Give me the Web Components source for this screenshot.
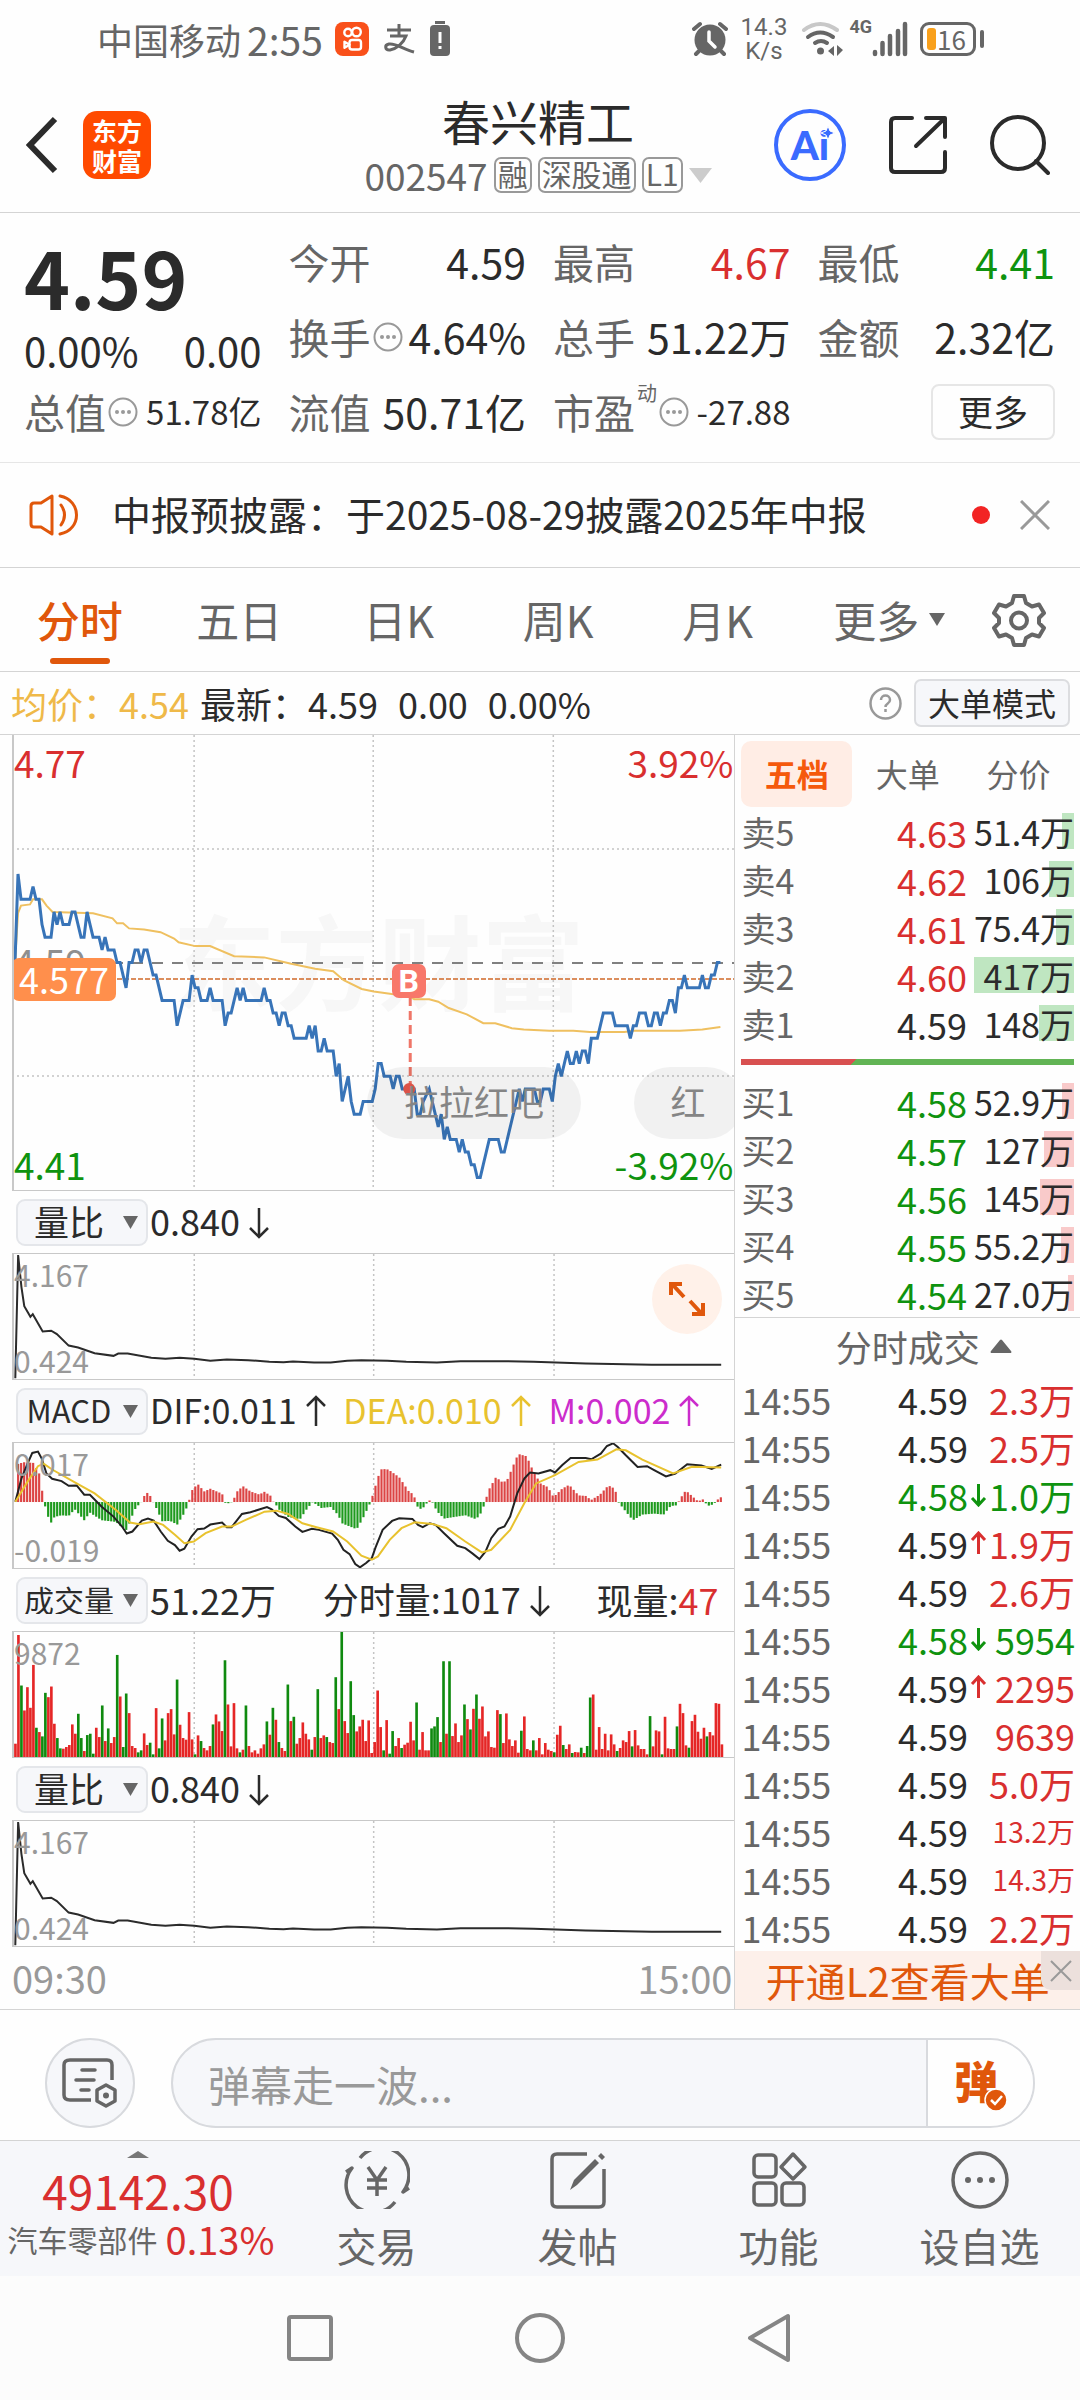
<!DOCTYPE html>
<html lang="zh-CN">
<head>
<meta charset="utf-8">
<meta name="viewport" content="width=device-width, initial-scale=1">
<title>春兴精工 002547</title>
<style>
  :root {
    --ink: #2b2b2b; --muted: #666; --faint: #999; --line: #d4d4d4;
    --up: #d92f2f; --down: #0f930f; --brand: #e0570b; --panel: #f6f7fa;
  }
  body { margin: 0; background: #fefefe; color: var(--ink); line-height: 1;
    font-family: "Noto Sans CJK SC", "Noto Sans", sans-serif; }
</style>
</head>
<body>
<stock-app></stock-app>
<script>
const BASE = `
  *, *::before, *::after { box-sizing: border-box; }
  button, input, select { font: inherit; color: inherit; background: none; border: 0; padding: 0; margin: 0; line-height: 1; }
  svg { display: block; flex: none; }
  svg:not([fill]) { fill: none; }
  svg:not([stroke]) { stroke: currentColor; }
  a { color: inherit; text-decoration: none; }
  .up { color: var(--up); } .down { color: var(--down); }
`;
function component(tag, css, html, setup) {
  const tpl = document.createElement('template');
  tpl.innerHTML = `<style>${BASE}${css}</style>${html}`;
  customElements.define(tag, class extends HTMLElement {
    constructor() { super(); this.attachShadow({ mode: 'open' }).append(tpl.content.cloneNode(true)); }
    connectedCallback() { if (setup && !this.ready) { this.ready = true; setup(this, this.shadowRoot); } }
  });
}

/* ---------- status bar ---------- */
component('status-bar', `
  :host { display: flex; justify-content: space-between; align-items: center; height: 78px; padding: 0 96px 0 97px; color: var(--muted); }
  div { display: flex; align-items: center; }
  .carrier { font-size: 36px; margin-right: 6px; }
  .time { font-size: 39px; margin-right: 12px; }
  .l svg { margin-right: 13px; }
  .r { height: 48px; }
  .speed { display: block; font: 24px/24px Roboto, "Liberation Sans", sans-serif; text-align: center; margin: 0 14px 0 13px; }
  .net { font: 700 18px/20px Roboto, "Liberation Sans", sans-serif; align-self: flex-start; margin: 2px 0 0 6px; }
  .bat { gap: 4px; margin-left: 12px; }
  .cell { width: 56px; height: 34px; padding-left: 4px; border: 3px solid var(--muted); border-radius: 9px; font-size: 26px; gap: 1px; }
  .cell::before { content: ""; width: 9px; height: 22px; border-radius: 3px; background: #f9a01b; }
  .bat::after { content: ""; width: 4px; height: 18px; border-radius: 2px; background: var(--muted); }
`, `
  <div class="l">
    <span class="carrier">中国移动</span><span class="time">2:55</span>
    <svg width="34" height="34" viewBox="0 0 34 34" stroke="none"><rect width="34" height="34" rx="8" fill="#f9501a"/><g stroke="#fff" stroke-width="2.4" fill="none"><circle cx="13" cy="10.5" r="3.7"/><circle cx="21.5" cy="10" r="4.3"/><rect x="14.5" y="18" width="11.5" height="9.5" rx="2.6"/><path d="M14.5 22.7l-5-3v6z" stroke-linejoin="round"/></g></svg>
    <svg width="34" height="34" viewBox="0 0 34 34" stroke-width="3"><path d="M5 8h24M17 2v12M8 14h16c-3 8-10 13-16 14-5 .5-6-5-1-6 7-1 14 5 25 8"/></svg>
    <svg width="22" height="36" viewBox="0 0 22 36" stroke="none" fill="#666"><rect x="6" y="0" width="10" height="3"/><rect x="1" y="4" width="20" height="31" rx="4"/><path d="M9.5 11h3v11h-3zM9.5 25h3v3h-3z" fill="#fff"/></svg>
  </div>
  <div class="r">
    <svg width="36" height="38" viewBox="0 0 36 38"><circle cx="18" cy="20" r="15.5" fill="#666" stroke="none"/><path d="M2 9l6-5M34 9l-6-5M7 31l-3 3M29 31l3 3" stroke-width="4" stroke-linecap="round"/><path d="M17 12v9l6 6" stroke="#fff" stroke-width="3.5" stroke-linecap="round"/></svg>
    <span class="speed">14.3<br>K/s</span>
    <svg width="42" height="36" viewBox="0 0 42 36" stroke-width="4" stroke-linecap="round"><path d="M3 9q16-12 33 0" stroke="#c8c8c8"/><path d="M7 16q12-9 25 0M14 22q6-4 12 0"/><circle cx="19.500" cy="30" r="3.500" fill="#666" stroke="none"/><path d="M27 30l6-5v10zM36 24l6 5-6 6z" fill="#666" stroke="none"/></svg>
    <span class="net">4G</span>
    <svg width="36" height="36" viewBox="0 0 36 36" stroke-width="4.500" stroke-linecap="round"><path d="M3 33v-2M10.500 33V22M18 33V15M26 33V10M33 33V3"/></svg>
    <div class="bat"><div class="cell">16</div></div>
  </div>
`);

/* ---------- header ---------- */
component('stock-header', `
  :host { display: grid; grid-template-columns: 1fr auto 1fr; align-items: center; height: 135px; padding: 0 30px 0 26px; border-bottom: 1px solid var(--line); }
  .l, .r { display: flex; align-items: center; }
  .l { gap: 25px; } .r { justify-content: flex-end; gap: 43px; }
  .logo { display: grid; place-content: center; width: 68px; height: 68px; border-radius: 14px; background: #ff4a00; color: #fff; font-size: 25px; font-weight: 700; line-height: 30px; text-align: center; }
  h1 { margin: 0 0 9px; font-size: 48px; font-weight: 400; text-align: center; line-height: 48px; padding-bottom: 3px; }
  .sub { display: flex; align-items: center; gap: 6px; color: var(--muted); font-size: 37px; line-height: 38px; }
  .tag { font-size: 30px; line-height: 29px; height: 36px; border: 2px solid #999; border-radius: 7px; padding: 0 2px; }
  .ai { position: relative; width: 72px; height: 72px; border: 4px solid #3a6bff; border-radius: 50%; color: #3a6bff; font: 900 40px/62px Lato, "Liberation Sans", sans-serif; text-align: center; }
  .ai svg { position: absolute; left: 43px; top: 13px; }
`, `
  <div class="l">
    <button aria-label="返回"><svg width="32" height="58" viewBox="0 0 32 58" stroke-width="6"><path d="M29 3L4 29l25 26"/></svg></button>
    <a class="logo" href="#home">东方<br>财富</a>
  </div>
  <div>
    <h1>春兴精工</h1>
    <div class="sub"><span>002547</span><span class="tag">融</span><span class="tag">深股通</span><span class="tag">L1</span>
      <svg width="23" height="15" viewBox="0 0 23 15" fill="#ccc" stroke="none"><path d="M0 0h23L11.5 15z"/></svg></div>
  </div>
  <div class="r">
    <button class="ai">Ai<svg width="14" height="14" viewBox="0 0 14 14" fill="#3a6bff" stroke="#fff" stroke-width="1"><path d="M7 0l2 5 5 2-5 2-2 5-2-5-5-2 5-2z"/></svg></button>
    <button aria-label="分享"><svg width="58" height="58" viewBox="0 0 58 58" stroke-width="4" stroke-linecap="round" stroke-linejoin="round"><path d="M23 2H6q-4 0-4 4v46q0 4 4 4h46q4 0 4-4V36M27 30L55 3M37 2h19v19"/></svg></button>
    <button aria-label="搜索"><svg width="60" height="60" viewBox="0 0 60 60" stroke-width="4" stroke-linecap="round"><circle cx="28" cy="28" r="26"/><path d="M46 46l12 12"/></svg></button>
  </div>
`);

/* ---------- quote panel ---------- */
component('quote-item', `
  :host { display: flex; justify-content: space-between; align-items: center; font-size: 41px; white-space: nowrap; }
  .k { display: flex; align-items: center; color: var(--muted); }
  svg { color: #999; margin-left: 2px; }
  sup { font-size: 20px; align-self: flex-start; margin: -8px 0 0 2px; line-height: 1; }
  :host([small]) .v { font-size: 33px; }
`, `<span class="k"></span><span class="v"><slot></slot></span>`, (el, root) => {
  const k = root.querySelector('.k');
  k.prepend(el.getAttribute('label'));
  if (el.hasAttribute('sup')) k.insertAdjacentHTML('beforeend', `<sup>${el.getAttribute('sup')}</sup>`);
  if (el.hasAttribute('info')) k.insertAdjacentHTML('beforeend', `<svg width="30" height="30" viewBox="0 0 30 30" stroke-width="2"><circle cx="15" cy="15" r="13.5"/><g fill="#999" stroke="none"><circle cx="9" cy="15" r="2"/><circle cx="15" cy="15" r="2"/><circle cx="21" cy="15" r="2"/></g></svg>`);
});
component('quote-panel', `
  :host { display: grid; grid-template-columns: repeat(4, 1fr); grid-template-rows: repeat(3, 75px); column-gap: 27px; padding: 11px 25px 13px 24px; border-bottom: 1px solid #e6e6e6; }
  .now { grid-row: span 2; display: flex; flex-direction: column; }
  .price { font-size: 78px; font-weight: 700; line-height: 104px; }
  .chg { display: flex; justify-content: space-between; font-size: 40px; line-height: 44px; }
  .more { justify-self: end; align-self: center; width: 124px; height: 56px; border: 2px solid #e6e6e6; border-radius: 8px; font-size: 35px; padding-bottom: 3px; }
`, `
  <div class="now"><span class="price">4.59</span><span class="chg"><span>0.00%</span><span>0.00</span></span></div>
  <quote-item label="今开">4.59</quote-item>
  <quote-item label="最高"><span class="up">4.67</span></quote-item>
  <quote-item label="最低"><span class="down">4.41</span></quote-item>
  <quote-item label="换手" info>4.64%</quote-item>
  <quote-item label="总手">51.22万</quote-item>
  <quote-item label="金额">2.32亿</quote-item>
  <quote-item label="总值" info small>51.78亿</quote-item>
  <quote-item label="流值">50.71亿</quote-item>
  <quote-item label="市盈" sup="动" info small>-27.88</quote-item>
  <button class="more">更多</button>
`);

/* ---------- notice ---------- */
component('notice-bar', `
  :host { display: flex; align-items: center; height: 105px; padding: 0 30px 0 28px; border-bottom: 1px solid var(--line); font-size: 39px; }
  a { flex: 1; margin-left: 32px; padding-bottom: 4px; white-space: nowrap; }
  i { width: 18px; height: 18px; border-radius: 50%; background: #f22424; margin-right: 30px; }
  button { color: #999; }
`, `
  <svg width="52" height="44" viewBox="0 0 52 44" stroke="#e0570b" stroke-width="3" stroke-linejoin="round" stroke-linecap="round"><path d="M3 13q0-3 3-3h7L24 3v38l-11-7H6q-3 0-3-3zM33 12q7 10 0 20M32 3c22 4 22 34 0 38"/></svg>
  <a href="#notice"><slot></slot></a><i></i>
  <button aria-label="关闭"><svg width="30" height="30" viewBox="0 0 30 30" stroke-width="3"><path d="M1 1l28 28M29 1L1 29"/></svg></button>
`);

/* ---------- period tabs ---------- */
component('period-tabs', `
  :host { display: flex; height: 104px; border-bottom: 1px solid var(--line); color: var(--muted); font-size: 43px; }
  nav { flex: 1; display: grid; grid-template-columns: repeat(6, 1fr); }
  button { display: flex; align-items: center; justify-content: center; position: relative; }
  .on { color: var(--brand); font-weight: 500; }
  .on::after { content: ""; position: absolute; bottom: 7px; width: 60px; height: 6px; border-radius: 3px; background: var(--brand); }
  .more { gap: 10px; padding-left: 24px; }
  .set { flex: none; width: 123px; }
`, `
  <nav><button class="on">分时</button><button>五日</button><button>日K</button><button>周K</button><button>月K</button>
  <button class="more">更多<svg width="16" height="13" viewBox="0 0 16 13" fill="#666" stroke="none"><path d="M0 0h16L8 13z"/></svg></button></nav>
  <button class="set" aria-label="设置"><svg width="54" height="54" viewBox="0 0 54 54" stroke-width="4" stroke-linejoin="round"><path d="M22 3h10l2 7 6 3.5 7-2 5 8.5-5 5v5l5 5-5 8.500-7-2-6 3.500-2 7H22l-2-7-6-3.500-7 2L2 35l5-5v-5l-5-5 5-8.5 7 2L20 10z"/><circle cx="27" cy="27.500" r="8"/></svg></button>
`);

component('price-strip', `
  :host { display: flex; align-items: center; height: 63px; padding: 0 10px 0 11px; border-bottom: 1px solid var(--line); font-size: 36px; white-space: nowrap; }
  .avg { color: #efb949; margin-right: 11px; }
  .n { margin-right: 20px; }
  .help { margin-left: auto; color: #999; margin-right: 12px; }
  .mode { height: 48px; width: 156px; font-size: 32px; background: var(--panel); border: 2px solid #dcdde0; border-radius: 7px; padding-bottom: 2px; }
`, `
  <span class="avg">均价：4.54</span><span class="n">最新：4.59</span><span class="n">0.00</span><span>0.00%</span>
  <button class="help" aria-label="帮助"><svg width="33" height="33" viewBox="0 0 33 33" stroke-width="2.5"><circle cx="16.5" cy="16.5" r="15"/><path d="M12 13c0-6 9-6 9 0 0 4-4.5 3-4.5 7M16.5 22v3"/></svg></button>
  <button class="mode">大单模式</button>
`);

/* ---------- series data ---------- */
/* minute, price in fen */
const PRICE = [1,459,2,466,3,464,6,464,7,465,8,464,9,464,10,462,11,461,13,461,14,463,15,462,16,463,17,462,19,462,20,463,21,463,22,462,23,461,24,461,25,463,26,462,27,461,29,461,30,460,31,461,32,460,34,460,35,459,36,459,38,457,39,459,40,459,41,460,42,460,43,459,44,460,45,460,46,459,47,458,48,458,50,456,54,456,55,454,57,456,59,456,60,458,61,457,62,457,63,456,65,456,66,457,67,456,70,456,71,454,72,455,73,455,75,457,76,456,77,457,78,456,83,456,84,457,85,456,86,456,87,455,88,455,89,454,90,455,91,455,92,454,93,454,94,453,98,453,99,454,100,453,101,454,102,452,103,452,104,453,105,452,107,452,108,450,109,451,110,448,112,450,113,448,114,447,116,447,117,448,120,448,121,449,122,451,123,451,124,450,126,450,127,449,128,450,129,450,130,449,134,449,135,447,136,447,137,448,139,449,140,448,141,447,142,446,143,447,144,445,145,446,146,445,148,445,149,444,150,445,151,444,152,444,153,443,154,443,155,442,156,442,157,443,159,445,162,445,163,444,164,444,165,445,169,449,170,448,171,449,172,449,174,449,175,448,176,448,177,449,179,449,180,448,181,450,182,451,183,450,185,452,186,451,187,451,188,452,189,451,190,452,191,452,192,451,193,453,195,453,196,454,197,455,200,455,201,454,205,454,206,453,207,454,208,454,209,455,211,455,212,454,213,454,214,455,215,455,216,454,217,455,218,455,219,456,220,456,221,455,222,457,223,457,224,458,225,457,229,457,230,458,231,457,232,457,233,458,234,458,235,459,236,459];
const AVERAGE = [1,459,2,462.9,3,463.5,6,463.6,7,464,10,464,11.5,463.5,13.5,463,27,462.9,33.5,462.5,35,462.1,37,462.1,39,461.7,44,461.6,49.5,461.4,54,460.9,55.5,460.6,61,460.3,66,460.3,74,459.5,84,459.4,93,458.9,101,458.5,107,458.3,110.5,457.6,116.5,456.9,120.5,456.7,126.5,456.5,132,456.4,134,456.1,139,456.1,142,455.9,145.5,455.4,151.5,454.9,157,454.2,161,454.2,166.5,453.8,170.5,453.7,179,453.6,187,453.6,192.5,453.5,204,453.5,207,453.6,222.5,453.6,230,453.7,236,453.9];
const RATIO = "32,566 38,193 45,290 51,348 64,380 69,372 90,424 108,422 120,432 145,467 165,473 200,490 240,498 250,491 270,491 320,504 350,507 380,504 411,507 445,513 480,509 525,511 570,516 600,517 620,515 665,518 700,518 735,513 765,511 820,513 860,516 925,518 975,514 1060,514 1130,516 1240,521 1380,525 1527,525";
const DIF = "32,935 45,865 58,820 68,788 80,784 88,805 98,850 110,866 130,873 145,887 162,886 178,914 190,914 215,950 240,980 258,1010 268,1031 280,1025 300,992 313,986 325,992 340,1025 355,1053 370,1066 380,1083 390,1077 405,1040 418,1018 432,1016 445,1004 470,998 480,1012 490,1012 512,972 530,967 545,960 565,951 575,958 590,978 605,984 625,1010 640,1026 660,1017 675,1020 690,1026 703,1031 715,1050 727,1080 740,1093 752,1123 762,1133 775,1120 787,1105 795,1073 810,1020 830,993 845,985 873,987 885,1005 895,1012 910,1000 922,1005 940,1030 968,1068 985,1075 1000,1091 1015,1108 1028,1085 1040,1045 1055,1017 1068,1010 1080,980 1095,910 1110,865 1122,847 1140,850 1165,840 1175,847 1190,825 1208,803 1240,803 1252,807 1272,790 1285,767 1298,759 1308,770 1325,795 1350,830 1370,828 1385,840 1410,859 1430,850 1455,822 1485,826 1507,836 1527,823";
const DEA = "32,935 60,870 80,828 92,820 110,838 160,878 200,910 245,960 275,998 295,1003 325,995 345,1005 370,1035 390,1060 410,1055 435,1030 470,1010 490,1010 520,990 560,965 585,962 610,972 640,1000 670,1012 705,1025 735,1055 765,1098 787,1110 800,1100 825,1050 850,1015 878,997 915,1002 945,1015 985,1055 1020,1088 1040,1080 1080,1020 1110,940 1135,880 1175,855 1225,815 1265,808 1305,777 1325,780 1360,808 1425,850 1465,830 1527,832";
const HIST = [38,115,50,120,70,118,83,85,89,33,95,-12,101,-43,108,-62,115,-45,130,-40,145,-42,158,-22,178,-55,190,-32,215,-55,245,-60,260,-78,268,-85,280,-40,287,-18,299,0,305,18,311,28,318,18,324,0,332,-22,343,-58,360,-57,375,-68,388,-38,398,-8,405,33,418,55,432,32,445,40,470,25,477,-3,488,-4,495,10,502,32,514,48,530,32,550,22,558,32,572,20,578,2,584,-8,590,-22,610,-45,635,-52,650,-20,662,0,680,-18,700,-15,715,-38,725,-65,755,-82,768,-50,782,-8,790,25,800,75,808,100,822,98,845,75,865,33,876,22,882,-10,888,-22,898,-15,908,6,916,-2,925,-28,940,-50,985,-40,1008,-52,1020,-30,1027,0,1034,35,1050,75,1065,58,1075,70,1085,105,1097,145,1115,138,1130,90,1145,55,1160,45,1172,15,1190,40,1205,52,1225,20,1243,18,1250,5,1270,22,1288,50,1302,40,1309,0,1320,-20,1340,-55,1360,-38,1385,-35,1405,-38,1420,-12,1433,-10,1440,10,1452,35,1470,12,1478,2,1488,8,1495,-5,1502,-12,1512,-5,1520,8,1527,15];
/* positive: rising minute, negative: falling minute */
const VOLUME = [40,367,-215,140,210,148,277,-88,75,-62,-193,180,212,100,-57,-26,25,30,36,98,70,-130,-57,18,-66,-70,-10,88,60,-155,48,-86,42,60,-307,182,-30,-191,132,33,27,-14,-20,71,36,-43,-8,147,-26,-116,50,132,144,68,-233,97,57,52,135,53,-8,65,-48,27,20,33,-98,128,107,78,-291,158,32,162,26,-14,22,-155,33,14,20,10,26,38,-107,67,-148,112,-45,27,18,-218,108,-121,40,57,104,70,53,-22,60,-204,57,65,-60,45,42,-240,144,-376,108,72,-228,-126,77,92,112,48,110,12,45,200,90,-20,111,-10,-78,33,57,-27,37,43,106,50,-164,22,75,20,20,-86,-92,-120,45,-288,70,-288,63,101,45,65,-158,114,-83,145,-188,115,152,62,77,30,28,141,-129,42,131,53,33,50,13,-79,122,24,20,-50,20,57,8,42,22,18,-14,67,94,-36,24,38,-12,15,14,-28,12,-33,-179,188,22,90,24,70,20,68,38,-18,27,50,45,78,-32,81,35,24,24,8,-123,32,80,77,-8,121,26,24,24,-92,160,132,35,-28,108,127,76,55,88,-62,75,65,162,160,38];

const PLOT_CSS = `
  .plot { position: relative; border: 1px solid #c8c8c8; border-width: 1px 0 1px 2px; }
  .plot > svg { position: absolute; top: 0; right: 0; left: -2px; width: calc(100% + 2px); height: 100%; }
  .plot polyline, .plot line { vector-effect: non-scaling-stroke; }
  .grid { stroke: #c4c4c4; stroke-width: 1.5; stroke-dasharray: 2 3; }
  .lab { position: absolute; }
  .tl, .bl { left: 0; } .tr, .br { right: 1px; }
`;

/* ---------- intraday chart ---------- */
component('intraday-chart', PLOT_CSS + `
  :host { display: block; }
  .plot { height: 456px; border-top: 0; font-size: 37px; overflow: hidden; }
  .tl, .tr { top: 9px; } .bl, .br { bottom: 7px; line-height: 38px; }
  .mark { position: absolute; left: 22%; top: 172px; font-size: 103px; font-weight: 700; color: #f7f7f7; white-space: nowrap; }
  .prev { position: absolute; left: 0; top: 208px; color: #8f8f8f; }
  .cost { position: absolute; left: -2px; top: 223px; height: 43px; padding: 0 7px; border-radius: 7px; background: #ff8f4c; color: #fff; font-size: 36px; line-height: 40px; }
  .b { position: absolute; left: 53%; top: 229px; width: 34px; height: 34px; margin-left: -4px; border-radius: 7px; background: #f8776a; color: #fff; font: 700 32px/34px Roboto, "Liberation Sans", sans-serif; text-align: center; }
  .pill { position: absolute; top: 332px; height: 72px; padding: 0 37px; border-radius: 36px; background: rgba(0,0,0,.05); color: #858585; font-size: 35px; line-height: 68px; white-space: nowrap; }
  .p1 { left: 49%; } .p2 { left: 86%; }
`, `
  <div class="plot">
    <span class="mark">东方财富</span>
    <svg viewBox="0 0 722 455" preserveAspectRatio="none">
      <g class="grid"><line x1="182" x2="182" y1="0" y2="455"/><line x1="361" x2="361" y1="0" y2="455"/><line x1="541" x2="541" y1="0" y2="455"/><line x1="0" x2="722" y1="114" y2="114"/><line x1="0" x2="722" y1="341" y2="341"/></g>
      <line x1="0" x2="722" y1="228" y2="228" stroke="#808080" stroke-width="2" stroke-dasharray="11 9"/>
    </svg>
    <span class="prev">4.59</span>
    <svg viewBox="0 0 722 455" preserveAspectRatio="none">
      <line x1="0" x2="722" y1="244" y2="244" stroke="#cf6a2a" stroke-width="1.5" stroke-dasharray="5 2"/>
      <polyline class="avg" stroke="#efc060" stroke-width="2"/><polyline class="px" stroke="#3874b8" stroke-width="3"/>
      <line x1="398" x2="398" y1="262" y2="352" stroke="#ef7668" stroke-width="3" stroke-dasharray="9 5"/><circle cx="397" cy="354" r="6" fill="#e8584c" stroke="none"/>
    </svg>
    <span class="cost">4.577</span><span class="b">B</span>
    <span class="pill p1">拉拉红吧</span><span class="pill p2">红</span>
    <span class="lab tl up">4.77</span><span class="lab tr up">3.92%</span>
    <span class="lab bl down">4.41</span><span class="lab br down">-3.92%</span>
  </div>
`, (el, root) => {
  const line = a => { let s = ''; for (let i = 0; i < a.length; i += 2) s += `${a[i] * 3},${((477 - a[i + 1]) * 455 / 36).toFixed(1)} `; return s; };
  root.querySelector('.px').setAttribute('points', line(PRICE));
  root.querySelector('.avg').setAttribute('points', line(AVERAGE));
});

/* ---------- indicator chart ---------- */
component('value-arrow', `:host { display: inline-block; vertical-align: -3px; margin-left: 9px; } :host([up]) svg { transform: rotate(180deg); }`,
  `<svg width="20" height="32" viewBox="0 0 20 32" stroke-width="2.5"><path d="M10 1v29M1 21l9 9 9-9"/></svg>`);
component('indicator-chart', PLOT_CSS + `
  :host { display: block; font-size: 36px; white-space: nowrap; }
  .bar { display: flex; align-items: center; height: 62px; padding-left: 4px; }
  .pick { position: relative; margin-right: 2px; }
  select { appearance: none; display: block; width: 132px; height: 47px; background: var(--panel); border: 2px solid #e4e6ea; border-radius: 9px; font-size: var(--pick, 35px); padding: 0 26px 3px 0; text-align: center; text-align-last: center; }
  .pick svg { position: absolute; right: 10px; top: 17px; pointer-events: none; }
  .read { flex: 1; display: flex; align-items: center; justify-content: var(--spread, flex-start); padding-bottom: 3px; }
  .plot { height: 127px; font-size: 30px; color: #999; }
  .tl { top: 5px; } .bl { bottom: 4px; }
`, `
  <div class="bar"><span class="pick"><select></select><svg width="15" height="13" viewBox="0 0 15 13" fill="#666" stroke="none"><path d="M0 0h15L7.5 13z"/></svg></span><span class="read"><slot></slot></span></div>
  <div class="plot"><svg preserveAspectRatio="none"></svg><span class="lab tl"></span><span class="lab bl"></span><slot name="over"></slot></div>
`, (el, root) => {
  const sel = root.querySelector('select');
  sel.setAttribute('aria-label', '指标');
  sel.append(new Option(el.getAttribute('name')));
  root.querySelector('.tl').textContent = el.getAttribute('max');
  root.querySelector('.bl').textContent = el.getAttribute('min') || '';
  const svg = root.querySelector('.plot svg'), kind = el.getAttribute('kind');
  const [y0, h] = kind === 'ratio' ? [190, 378] : kind === 'macd' ? [758, 377] : [0, 376];
  svg.setAttribute('viewBox', `25 ${y0} 1530 ${h}`);
  let s = [411, 791, 1173].map(x => `<line class="grid" x1="${x}" x2="${x}" y1="${y0}" y2="${y0 + h}"/>`).join('');
  if (kind === 'ratio') s += `<polyline points="${RATIO}" stroke="#2b2b2b" stroke-width="2"/>`;
  if (kind === 'volume') VOLUME.forEach((v, i) => s += `<rect x="${29.5 + 6.34 * i}" y="${376 - Math.abs(v)}" width="5.6" height="${Math.abs(v)}" fill="${v > 0 ? '#e52626' : '#0f8a0f'}" stroke="none"/>`);
  if (kind === 'macd') {
    for (let x = 38, j = 0; x < 1530; x += 6.36) {
      while (j + 3 < HIST.length && HIST[j + 2] < x) j += 2;
      const t = Math.min(1, (x - HIST[j]) / ((HIST[j + 2] ?? 1528) - HIST[j] || 1));
      const v = HIST[j + 1] + ((HIST[j + 3] ?? 15) - HIST[j + 1]) * t;
      s += `<rect x="${x - 2.3}" y="${v > 0 ? 936 - v : 936}" width="4.6" height="${Math.abs(v)}" fill="${v > 0 ? '#dc4444' : '#1d9a1d'}" stroke="none"/>`;
    }
    s += `<polyline points="${DIF}" stroke="#222" stroke-width="2"/><polyline points="${DEA}" stroke="#e8c22e" stroke-width="2"/>`;
  }
  svg.innerHTML = s;
});

/* ---------- order book ---------- */
component('order-book', `
  :host { display: block; padding: 6px 6px 0; font-size: 34px; }
  nav { display: flex; height: 66px; font-size: 32px; color: var(--muted); }
  nav button { flex: 1 1 0; border-radius: 10px; padding-bottom: 2px; }
  nav .on { background: #ffede5; color: #f5590c; font-weight: 700; }
  table { width: 100%; border-collapse: collapse; table-layout: fixed; }
  td { height: 48px; padding: 1px 0 0; text-align: right; line-height: 36px; white-space: nowrap; }
  td:first-child { text-align: left; width: 70px; color: var(--muted); }
  td:nth-child(2) { font-size: 36px; }
  td:last-child { width: 107px; background: linear-gradient(var(--c), var(--c)) no-repeat right center / var(--w) 36px; }
  .sell { --c: #bfe6c1; } .buy { --c: #f9caca; }
  .split { height: 6px; margin: 12px 0; background: linear-gradient(135deg, #d85050 0 34%, #62b455 34%); }
`, `
  <nav><button class="on">五档</button><button>大单</button><button>分价</button></nav>
  <table class="sell"></table><div class="split"></div><table class="buy"></table>
`, (el, root) => {
  const fill = (cls, rows) => root.querySelector(cls).innerHTML = rows.map(([n, p, q, w, c]) =>
    `<tr><td>${n}</td><td class="${c}">${p}</td><td style="--w:${w}px">${q}</td></tr>`).join('');
  fill('.sell', [['卖5','4.63','51.4万',12,'up'],['卖4','4.62','106万',25,'up'],['卖3','4.61','75.4万',18,'up'],['卖2','4.60','417万',100,'up'],['卖1','4.59','148万',35,'']]);
  fill('.buy', [['买1','4.58','52.9万',12,'down'],['买2','4.57','127万',30,'down'],['买3','4.56','145万',34,'down'],['买4','4.55','55.2万',13,'down'],['买5','4.54','27.0万',6,'down']]);
});

/* ---------- trade list ---------- */
component('trade-list', `
  :host { display: block; border-top: 1px solid var(--line); font-size: 36px; }
  .head { display: flex; width: 100%; height: 57px; align-items: center; justify-content: center; gap: 10px; padding: 0 0 2px 32px; color: var(--muted); }
  table { width: 100%; border-collapse: collapse; table-layout: fixed; }
  td { height: 48px; padding: 0; text-align: right; line-height: 36px; white-space: nowrap; }
  td:first-child { text-align: left; width: 100px; padding-left: 6px; color: var(--muted); }
  td:nth-child(3) { width: 19px; } td:nth-child(3) svg { margin-left: 2px; }
  td:last-child { width: 93px; padding-right: 5px; }
  td.s { font-size: 28px; }
`, `
  <button class="head">分时成交<svg width="22" height="14" viewBox="0 0 22 14" fill="#666" stroke="none"><path d="M1 14q-1-1 0-2L10 1q1-1 2 0l9 11q1 1 0 2z"/></svg></button>
  <table></table>
`, (el, root) => {
  const arrow = d => d ? `<svg width="17" height="24" viewBox="0 0 17 24" stroke-width="3"><path d="${d > 0 ? 'M8.5 23V3M2 9l6.5-7L15 9' : 'M8.5 1v20M2 15l6.5 7 6.5-7'}"/></svg>` : '';
  root.querySelector('table').innerHTML = [['2.3万',0],['2.5万',0],['1.0万',-1],['1.9万',1],['2.6万',0],['5954',-1],['2295',1],['9639',0],['5.0万',0],['13.2万',0],['14.3万',0],['2.2万',0]]
    .map(([q, d]) => { const c = d < 0 ? 'down' : 'up';
      return `<tr><td>14:55</td><td class="${d < 0 ? 'down' : ''}">${d < 0 ? '4.58' : '4.59'}</td><td class="${c}">${arrow(d)}</td><td class="${c}${q.length > 4 ? ' s' : ''}">${q}</td></tr>`; }).join('');
});

component('level-two-promo', `
  :host { flex: 1; display: flex; position: relative; background: #fdf0ea; color: var(--brand); font-size: 40px; }
  a { flex: 1; display: grid; place-content: center; }
  button { position: absolute; top: 0; right: 0; width: 39px; height: 39px; display: grid; place-content: center; background: #ece0dc; border-bottom-left-radius: 10px; color: #999; }
`, `<a href="#l2">开通L2查看大单</a><button aria-label="关闭"><svg width="22" height="22" viewBox="0 0 22 22" stroke-width="2"><path d="M1 1l20 20M21 1L1 21"/></svg></button>`);

/* ---------- comment bar ---------- */
component('danmu-bar', `
  :host { display: flex; align-items: center; gap: 36px; height: 131px; padding: 16px 45px 0; border-top: 1px solid var(--line); }
  .set { width: 90px; height: 90px; border-radius: 50%; border: 2px solid #d8dade; background: var(--panel); display: grid; place-content: center; color: var(--muted); flex: none; }
  .box { flex: 1; display: flex; height: 90px; border: 2px solid #d8dade; border-radius: 45px; background: var(--panel); overflow: hidden; }
  input { flex: 1; min-width: 0; padding: 0 0 0 35px; font-size: 42px; }
  input::placeholder { color: #999; opacity: 1; }
  .send { position: relative; width: 107px; border-left: 2px solid #d8dade; background: #fefefe; color: var(--brand); font-size: 44px; font-weight: 900; text-align: left; padding: 0 0 6px 26px; }
  .send svg { position: absolute; left: 56px; top: 48px; }
`, `
  <button class="set" aria-label="弹幕设置"><svg width="58" height="54" viewBox="0 0 58 54" stroke-width="3.5"><path d="M51 24V9q0-5-5-5H9Q3 4 3 9v30q0 5 6 5h21"/><path d="M21 14h13M15 24h18M20 34h8" stroke-linecap="round"/><path d="M45 29l9 5v11l-9 5-9-5V34z" stroke-linejoin="round"/><circle cx="45" cy="39.5" r="3" fill="#666" stroke="none"/></svg></button>
  <div class="box"><input type="text" aria-label="弹幕" placeholder="弹幕走一波..."><button class="send" aria-label="发送弹幕">弹<svg width="24" height="24" viewBox="0 0 24 24"><circle cx="12" cy="12" r="11" fill="#e0570b" stroke="#fff" stroke-width="1.5"/><path d="M7 12l4 4 7-8" stroke="#fff" stroke-width="2.5"/></svg></button></div>
`);

/* ---------- bottom navigation ---------- */
component('bottom-nav', `
  :host { display: flex; height: 136px; background: var(--panel); border-top: 1px solid var(--line); color: var(--muted); }
  .index { width: 276px; flex: none; display: flex; flex-direction: column; align-items: center; padding-top: 10px; white-space: nowrap; }
  .index b { font-size: 46px; font-weight: 400; line-height: 64px; color: var(--up); }
  .index span { display: flex; align-items: center; gap: 8px; font-size: 30px; line-height: 34px; padding-left: 6px; }
  .index em { font-size: 38px; font-style: normal; }
  .item { flex: 1 1 0; display: flex; flex-direction: column; align-items: center; padding-top: 10px; gap: 16px; font-size: 40px; }
`, `
  <a class="index" href="#index"><svg width="22" height="7" viewBox="0 0 22 7" fill="#777" stroke="none"><path d="M11 0l11 7H0z"/></svg><b>49142.30</b><span>汽车零部件<em class="up">0.13%</em></span></a>
  <a class="item" href="#trade"><svg width="66" height="58" viewBox="0 0 66 58" stroke-width="3.5" stroke-linejoin="round"><path d="M16 7A27 27 0 0 1 59 41l6-4M51 51A27 27 0 0 1 8 17l-6 4"/><path d="M24 16l9 13 9-13M23 29h20M23 37h20M33 29v16"/></svg>交易</a>
  <a class="item" href="#post"><svg width="58" height="58" viewBox="0 0 58 58" stroke-width="3.5"><path d="M38 3H8Q3 3 3 8v43q0 5 5 5h42q5 0 5-5V18"/><path d="M21 39l4-10L46 8l4 4-22 22zM49 5l3-3 4 4-3 3z" fill="#666" stroke="none"/></svg>发帖</a>
  <a class="item" href="#tools"><svg width="58" height="58" viewBox="0 0 58 58" stroke-width="3.5"><rect x="4" y="4" width="22" height="22" rx="4"/><rect x="4" y="32" width="22" height="22" rx="4"/><rect x="32" y="32" width="22" height="22" rx="4"/><path d="M43 3l12 13-12 12-12-12z" stroke-linejoin="round"/></svg>功能</a>
  <a class="item" href="#watch"><svg width="58" height="58" viewBox="0 0 58 58" stroke-width="3.5"><circle cx="29" cy="29" r="27"/><g fill="#666" stroke="none"><circle cx="17" cy="29" r="3"/><circle cx="29" cy="29" r="3"/><circle cx="41" cy="29" r="3"/></g></svg>设自选</a>
`);

component('system-nav', `
  :host { display: flex; justify-content: center; gap: 180px; height: 124px; align-items: center; background: #fcfcfc; color: #858585; }
`, `
  <button aria-label="最近任务"><svg width="50" height="50" viewBox="0 0 50 50" stroke-width="4"><rect x="4" y="4" width="42" height="42" rx="2"/></svg></button>
  <button aria-label="主屏幕"><svg width="50" height="50" viewBox="0 0 50 50" stroke-width="4"><circle cx="25" cy="25" r="23"/></svg></button>
  <button aria-label="返回上一级"><svg width="50" height="50" viewBox="0 0 50 50" stroke-width="4" stroke-linejoin="round"><path d="M43 3v44L5 25z"/></svg></button>
`);

/* ---------- page ---------- */
component('stock-app', `
  :host { display: block; overflow: hidden; }
  main { display: flex; }
  .left { flex: 1; min-width: 0; padding-left: 12px; }
  .right { flex: none; width: 32%; display: flex; flex-direction: column; border-left: 1px solid var(--line); }
  .axis { display: flex; justify-content: space-between; align-items: center; height: 62px; padding: 0 2px 0 0; color: #999; font-size: 38px; }
  .full { position: absolute; right: 12px; top: 10px; width: 70px; height: 70px; border-radius: 50%; background: #fff1e9; color: var(--brand); display: grid; place-content: center; }
  .macd { --pick: 31px; --spread: space-between; font-size: 34px; }
  .macd .v:last-of-type { margin-right: 35px; }
  .vol { --pick: 30px; --spread: space-between; }
  .vol .v:last-of-type { margin-right: 16px; }
`, `
  <status-bar></status-bar>
  <stock-header></stock-header>
  <quote-panel></quote-panel>
  <notice-bar>中报预披露：于2025-08-29披露2025年中报</notice-bar>
  <period-tabs></period-tabs>
  <price-strip></price-strip>
  <main>
    <div class="left">
      <intraday-chart></intraday-chart>
      <indicator-chart kind="ratio" name="量比" max="4.167" min="0.424"><span>0.840<value-arrow></value-arrow></span>
        <button slot="over" class="full" aria-label="全屏"><svg width="36" height="36" viewBox="0 0 36 36" stroke-width="4"><path d="M2 14V3h11M3 3l12 13M34 22v11H23M33 33L21 20"/></svg></button></indicator-chart>
      <indicator-chart class="macd" kind="macd" name="MACD" max="0.017" min="-0.019"><span class="v">DIF:0.011<value-arrow up></value-arrow></span><span class="v" style="color:#e8c22e">DEA:0.010<value-arrow up></value-arrow></span><span class="v" style="color:#cc2ccc">M:0.002<value-arrow up></value-arrow></span></indicator-chart>
      <indicator-chart class="vol" kind="volume" name="成交量" max="9872"><span class="v">51.22万</span><span class="v">分时量:1017<value-arrow></value-arrow></span><span class="v">现量:<span class="up">47</span></span></indicator-chart>
      <indicator-chart kind="ratio" name="量比" max="4.167" min="0.424"><span>0.840<value-arrow></value-arrow></span></indicator-chart>
      <div class="axis"><span>09:30</span><span>15:00</span></div>
    </div>
    <div class="right"><order-book></order-book><trade-list></trade-list><level-two-promo></level-two-promo></div>
  </main>
  <danmu-bar></danmu-bar>
  <bottom-nav></bottom-nav>
  <system-nav></system-nav>
`);
</script>
</body>
</html>
